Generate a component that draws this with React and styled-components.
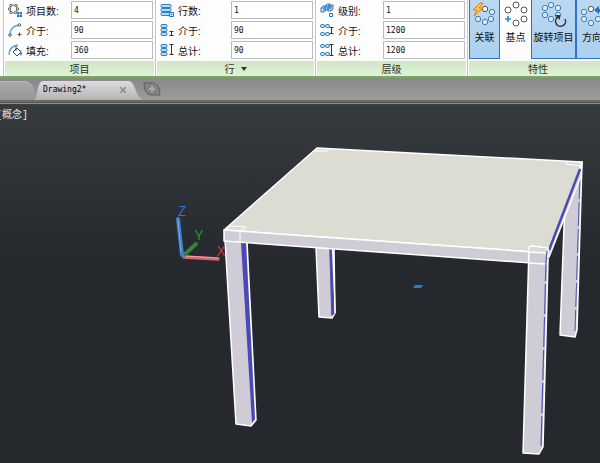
import React from 'react';
import styled, { createGlobalStyle } from 'styled-components';

const GlobalStyle = createGlobalStyle`
  * {
    box-sizing: border-box;
  }

  body {
    margin: 0;
    background: #25292e;
    font-family: "Liberation Sans", "Noto Sans CJK SC", sans-serif;
    font-size: 10px;
  }

  button, input {
    font: inherit;
    margin: 0;
    padding: 0;
  }
`;

const Page = styled.div`
  display: flex;
  flex-direction: column;
  min-height: 100vh;
  overflow: hidden;
`;

const Ribbon = styled.header`
  display: flex;
  overflow: hidden;
  padding-left: 3px;
  background: #fdfdfd;
  border-bottom: 2px solid #72ad54;
`;

const Panel = styled.section`
  display: flex;
  flex-direction: column;
  flex: 0 0 ${({ $width }) => $width}px;
  border-left: 1px solid #c4c8c4;
`;

const PanelBody = styled.div`
  display: flex;
  flex-direction: column;
  flex: 1;
  gap: 2px;
  padding: 1px 2px 2px 4px;
`;

const PanelTitle = styled.h2`
  display: flex;
  align-items: center;
  justify-content: center;
  gap: 6px;
  height: 15px;
  margin: 0 1px;
  color: #2c352c;
  background: linear-gradient(#cfe6c4, #e0f2d8);
  font-size: 10px;
  font-weight: 400;
`;

const FieldRow = styled.div`
  display: flex;
  align-items: center;
  height: 18px;
`;

const FieldLabel = styled.label`
  flex: 1;
  padding-left: 4px;
  color: #111;
  white-space: nowrap;
`;

const FieldInput = styled.input`
  flex: 0 0 82px;
  width: 82px;
  height: 18px;
  padding: 1px 0 0 2px;
  color: #111;
  background: #fff;
  border: 1px solid #bcbcc0;
  border-radius: 0;
  font-family: "DejaVu Sans Mono", monospace;
  font-size: 8px;
`;

const ToolGroup = styled.div`
  display: flex;
  flex: 1;
  padding: 0 0 2px 1px;
`;

const ToolButton = styled.button`
  display: flex;
  flex-direction: column;
  align-items: center;
  flex: 0 0 ${({ $width }) => $width}px;
  height: 59px;
  padding-top: 1px;
  color: #111;
  background: ${({ $on }) => ($on ? 'linear-gradient(#bcd8f1, #abd0f0)' : 'none')};
  border: 1px solid ${({ $on }) => ($on ? '#3272c2' : 'transparent')};
  border-top: 0;
  white-space: nowrap;
`;

const TabBar = styled.nav`
  display: flex;
  align-items: flex-end;
  height: 22px;
  background: linear-gradient(#888, #9c9c9c);
`;

const TabBarEdge = styled.div`
  height: 5px;
  background: linear-gradient(#6a6a6a 0 2px, #55564f 2px 3px, #8d9185 3px 4px, #3b4045 4px);
`;

const IdleTab = styled.button`
  width: 34px;
  height: 19px;
  background: linear-gradient(#a9a9a9, #979797);
  border: 0;
  border-top: 1px solid #b9b9b9;
  border-radius: 0 10px 2px 0;
`;

const ActiveTab = styled.div`
  position: relative;
  display: flex;
  align-items: center;
  justify-content: space-between;
  width: 109px;
  height: 19px;
  padding: 0 17px 2px 9px;
`;

const TabShape = styled.svg`
  position: absolute;
  inset: 0;
  width: 100%;
  height: 100%;
`;

const TabName = styled.button`
  position: relative;
  color: #000;
  background: none;
  border: 0;
  font-family: "DejaVu Sans Mono", monospace;
  font-size: 8px;
`;

const IconButton = styled.button`
  position: relative;
  display: flex;
  background: none;
  border: 0;
`;

const NewTab = styled(IconButton)`
  align-self: center;
`;

const Viewport = styled.main`
  position: relative;
  flex: 1;
  background: linear-gradient(#363b40, #25292e 45%);
`;

const ViewStyle = styled.button`
  position: absolute;
  top: 1px;
  left: -4px;
  color: #e8e8e8;
  background: none;
  border: 0;
  font-family: "Liberation Mono", "Noto Sans CJK SC", monospace;
`;

const Drawing = styled.svg`
  display: block;
  width: 100%;
`;

const blue = '#2f7fc4';

const Rings = ({ points, r = 2, color = '#555', fill = '#fff' }) => (
  <g fill={fill} stroke={color}>
    {points.map(([x, y]) => <circle key={`${x}-${y}`} cx={x} cy={y} r={r} />)}
  </g>
);

const IBeam = ({ x, top, bottom }) => (
  <path
    d={`M${x - 2} ${top}h4M${x} ${top}V${bottom}M${x - 2} ${bottom}h4`}
    fill="none"
    stroke="#333"
  />
);

const Bars = ({ rows, x = 1, width = 6, height = 3 }) => (
  <g fill="#b9dcf6" stroke={blue}>
    {rows.map((y) => <rect key={y} x={x} y={y} width={width} height={height} rx="1" />)}
  </g>
);

const Chains = ({ rows }) => (
  <g fill="#d5eafa" stroke={blue}>
    {rows.map((y) => (
      <g key={y}>
        <rect x="0.5" y={y} width="4" height="3" rx="1.5" />
        <rect x="5.5" y={y} width="4" height="3" rx="1.5" />
      </g>
    ))}
  </g>
);

const icons = {
  count: (
    <>
      <circle cx="5.5" cy="6" r="4" fill="none" stroke="#666" />
      <Rings r={1.2} points={[[3, 2.5], [8, 2.5], [1.5, 6], [9.5, 6], [3, 9.5], [7.5, 9.5]]} />
      <path d="M9 9h2v2H9zM12 9h2v2h-2zM9 12h2v2H9zM12 12h2v2h-2z" fill="#1f74cc" />
      <path d="M10 10h3v3h-3z" fill="none" stroke="#1f74cc" />
    </>
  ),
  between: (
    <>
      <path d="M2 11C2 6 5 3 11 2" fill="none" stroke="#4d9bdc" strokeWidth="1.3" />
      <Rings r={1.3} points={[[2, 12], [11.5, 2]]} />
      <path d="M9.5 11.5h4M11.5 9.5v4" stroke="#555" />
    </>
  ),
  fill: (
    <>
      <path d="M1 12C1 6 4 3 10 2" fill="none" stroke="#4d9bdc" strokeWidth="1.3" />
      <path d="M5 9l4-4 4 4-4 4zM8 3v5" fill="#fff" stroke="#444" />
      <path d="M12 7q3 3 1 6l-1-2z" fill="#1f74cc" />
    </>
  ),
  rows: (
    <>
      <Bars rows={[1.5, 5.5, 9.5]} width={10} />
      <path d="M9.5 9.5h4v4h-4z" fill="#fff" stroke="#1f74cc" />
      <path d="M11.5 10v3M10 11.5h3" stroke="#8dbde8" />
    </>
  ),
  rowBetween: (
    <>
      <Bars rows={[1.5, 5.5, 9.5]} />
      <IBeam x={11.5} top={8.5} bottom={12.5} />
    </>
  ),
  rowTotal: (
    <>
      <Bars rows={[1.5, 5.5, 9.5]} />
      <IBeam x={11.5} top={1.5} bottom={11.5} />
    </>
  ),
  levels: (
    <>
      <g fill="#d5eafa" stroke={blue}>
        <path d="M1 5l2-2h3v4l-2 2H1zM5 3l2-2h3v4L8 7H5zM8 4l2-2h3v4l-2 2H8z" />
        <path d="M1 5h3v4M4 5l2-2M5 3h3v4M8 3l2-2M8 4h3v4M11 4l2-2" fill="none" />
      </g>
      <path d="M9.5 10.5h3v3h-3z" fill="#fff" stroke="#1f74cc" />
    </>
  ),
  levelBetween: (
    <>
      <Chains rows={[1.5, 9.5]} />
      <IBeam x={11.5} top={4.5} bottom={10.5} />
    </>
  ),
  levelTotal: (
    <>
      <Chains rows={[1.5, 9.5]} />
      <IBeam x={11.5} top={1.5} bottom={12.5} />
    </>
  ),
};

const Field = ({ id, icon, label, value }) => (
  <FieldRow>
    <svg width="14" height="15" viewBox="0 0 14 15" aria-hidden="true">{icons[icon]}</svg>
    <FieldLabel htmlFor={id}>{label}:</FieldLabel>
    <FieldInput id={id} defaultValue={value} />
  </FieldRow>
);

const BlueRings = ({ points }) => (
  <Rings r={2.7} color="#3e7fb8" fill="#d9ebfa" points={points} />
);

const toolArt = {
  link: (
    <>
      <BlueRings points={[[20, 11], [19, 18], [13, 21], [6, 18]]} />
      <Rings r={2.7} points={[[13, 8]]} />
      <path d="M8 2L1 9h4l-3 6 9-8H7l4-5z" fill="#ffc94d" stroke="#e07b16" />
    </>
  ),
  base: (
    <>
      <Rings r={3} points={[[13, 4], [21, 9], [21, 18], [13, 22], [5, 9]]} />
      <path d="M2 18h6M5 15v6" stroke="#2a8fdf" strokeWidth="1.6" />
    </>
  ),
  rotate: (
    <>
      <BlueRings points={[[10, 4], [17, 7], [17, 14], [10, 18], [4, 14], [4, 7]]} />
      <path d="M17 16a5 5 0 1 0 7 2" fill="none" stroke="#333" strokeWidth="1.5" />
      <path d="M14 14h5v5z" fill="#333" />
    </>
  ),
  direction: (
    <>
      <BlueRings points={[[5, 11], [5, 18], [12, 22], [19, 18]]} />
      <Rings r={2.7} points={[[12, 8]]} />
      <path d="M15 9l5-4v3h6v3h-6v2z" fill="#1f74cc" />
    </>
  ),
};

const Tool = ({ art, label, width, on }) => (
  <ToolButton $width={width} $on={on} aria-pressed={Boolean(on)}>
    <svg width="26" height="28" viewBox="0 0 26 28" aria-hidden="true">{toolArt[art]}</svg>
    {label}
  </ToolButton>
);

const panels = [
  {
    title: '项目',
    width: 152,
    fields: [['count', '项目数', '4'], ['between', '介于', '90'], ['fill', '填充', '360']],
  },
  {
    title: '行',
    width: 160,
    menu: true,
    fields: [['rows', '行数', '1'], ['rowBetween', '介于', '90'], ['rowTotal', '总计', '90']],
  },
  {
    title: '层级',
    width: 152,
    fields: [['levels', '级别', '1'], ['levelBetween', '介于', '1200'], ['levelTotal', '总计', '1200']],
  },
];

const Table = () => (
  <g stroke="#fff" strokeWidth="1.5" strokeLinejoin="round">
    {/* back legs */}
    <path d="M316 247L319 317L332 318L335 313L333 249Z" fill="#cfccd6" />
    <path d="M330 249L331 249L334 313L332 315Z" fill="#4b49b8" stroke="#4b49b8" />
    <path d="M334 249L335 313" />
    <path d="M565 200L560 335L575 337L577 330L582 162Z" fill="#cfccd6" />
    <path d="M580 175L575 331" stroke="#5250bb" strokeDasharray="24 3" strokeWidth="1" />

    {/* front left leg */}
    <path d="M225 240L236 424L251 426L256 420L247 242Z" fill="#cfccd6" />
    <path d="M241 243L246 243L255 419L252 423Z" fill="#4b49b8" stroke="none" />

    {/* top */}
    <path d="M582 162L581 176L549 257L547 252Z" fill="#cfccd6" />
    <path d="M317 148L582 162L547 253L224 230Z" fill="#dddcd3" />
    <path d="M224 230L547 253L546 264L224 241Z" fill="#cfccd6" />
    <path d="M580 169L549 250" stroke="#4b49b8" strokeWidth="2.5" />

    {/* front right leg */}
    <path d="M529 249Q529 246 532 246L548 248L548 260L543 447L539 454L523 453Z" fill="#cfccd6" />
    <path d="M530 247L547 249L547 252L529 252Z" fill="#dddcd3" stroke="none" />
    <path d="M528 252L547 253M528 263L546 264L548 260" fill="none" />
    <path d="M547 251L546 262L541 448" fill="none" stroke="#5250bb" strokeDasharray="30 3" strokeWidth="1.2" />

    {/* corner marks */}
    <path d="M314 151H328M224 230L231 226L246 227L240 231V242M566 161V164L581 166" fill="none" strokeWidth="1" />
  </g>
);

const Axes = () => (
  <g
    fontFamily="Open Sans, sans-serif"
    fontSize="14"
    strokeLinecap="round"
  >
    <path d="M184 257L218 259" stroke="#d9646c" strokeWidth="3.5" />
    <path d="M184 256L218 258" stroke="#f2a2a4" strokeWidth="1" />
    <path d="M184 255L196 244" stroke="#37823b" strokeWidth="4" />
    <path d="M178 219L182 255" stroke="#3f7bc8" strokeWidth="4" />
    <path d="M178 220L181 252" stroke="#78abea" strokeWidth="1" />
    <text x="178" y="216" fill="#2f72d0">Z</text>
    <text x="195" y="240" fill="#2b9a35">Y</text>
    <text x="217" y="256" fill="#cc3f42">X</text>
  </g>
);

function App() {
  return (
    <>
      <GlobalStyle />
      <Page>
        <Ribbon>
          {panels.map(({ title, width, menu, fields }) => (
            <Panel key={title} $width={width}>
              <PanelBody>
                {fields.map(([icon, label, value]) => (
                  <Field key={icon} id={icon} icon={icon} label={label} value={value} />
                ))}
              </PanelBody>
              <PanelTitle>
                {title}
                {menu && (
                  <svg width="6" height="4" aria-hidden="true">
                    <path d="M0 0h6L3 4z" fill="#2c352c" />
                  </svg>
                )}
              </PanelTitle>
            </Panel>
          ))}
          <Panel $width={141}>
            <ToolGroup>
              <Tool art="link" label="关联" width={31} on />
              <Tool art="base" label="基点" width={31} />
              <Tool art="rotate" label="旋转项目" width={45} on />
              <Tool art="direction" label="方向" width={32} on />
            </ToolGroup>
            <PanelTitle>特性</PanelTitle>
          </Panel>
        </Ribbon>

        <TabBar>
          <IdleTab aria-label="Drawing1" />
          <ActiveTab>
            <TabShape viewBox="0 0 109 19" preserveAspectRatio="none" aria-hidden="true">
              <defs>
                <linearGradient id="tab" x2="0" y2="1">
                  <stop stopColor="#dcdcdc" />
                  <stop offset="1" stopColor="#b4b4b4" />
                </linearGradient>
              </defs>
              <path d="M0 19C4 16 3 0 9 0H94C102 0 101 16 109 19Z" fill="url(#tab)" />
            </TabShape>
            <TabName>Drawing2*</TabName>
            <IconButton aria-label="Close">
              <svg width="6" height="6" viewBox="0 0 6 6">
                <path d="M0 0l6 6M6 0L0 6" stroke="#888" strokeWidth="1.5" />
              </svg>
            </IconButton>
          </ActiveTab>
          <NewTab aria-label="New">
            <svg width="18" height="14" viewBox="0 0 18 14">
              <path d="M1 1H11Q17 3 17 13H8Q1 12 1 1Z" fill="#858585" stroke="#5e5e5e" />
              <path d="M6 7h6M9 4v6" stroke="#aaa" strokeWidth="2" />
            </svg>
          </NewTab>
        </TabBar>
        <TabBarEdge />

        <Viewport>
          <Drawing viewBox="0 105 600 358" role="img" aria-label="Table">
            <Table />
            <Axes />
            <path d="M415 285H423L421 288H413Z" fill="#1682e0" />
          </Drawing>
          <ViewStyle>[概念]</ViewStyle>
        </Viewport>
      </Page>
    </>
  );
}

export default App;
